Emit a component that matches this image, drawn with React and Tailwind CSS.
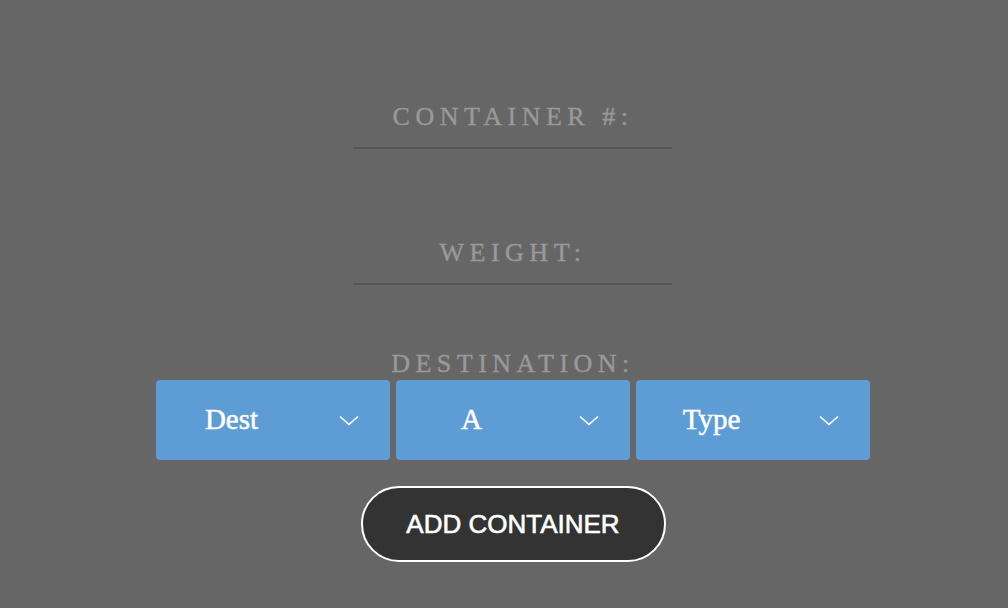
import { useState } from 'react'

const serif = { fontFamily: '"Liberation Serif", "Times New Roman", serif' }

function Field({ label, value, onChange, className = '' }) {
  return (
    <div className={`flex flex-col items-center ${className}`}>
      <label className="block h-[26px] text-[26px] leading-[26px] tracking-[5.5px] text-[#999999] uppercase [-webkit-text-stroke:0.4px_#999999]" style={serif}>
        {label}
      </label>
      <input
        className="w-[318px] h-[19px] bg-transparent border-b-2 border-[#555555] outline-none text-center text-[#dddddd]"
        value={value}
        onChange={e => onChange(e.target.value)}
      />
    </div>
  )
}

function Chevron() {
  return (
    <svg width="20" height="11" viewBox="0 0 20 11" fill="none" className="ml-auto mr-[31px]">
      <path d="M1 1.5 L10 9.5 L19 1.5" stroke="#ffffff" strokeWidth="1.6" />
    </svg>
  )
}

function Select({ text }) {
  return (
    <div className="w-[234px] h-[80px] rounded-[4px] bg-[#5e9cd5] flex items-center cursor-pointer">
      <span className="w-[151px] text-center text-[29px] text-white [-webkit-text-stroke:0.5px_white]" style={serif}>{text}</span>
      <Chevron />
    </div>
  )
}

export default function App() {
  const [container, setContainer] = useState('')
  const [weight, setWeight] = useState('')

  return (
    <div className="min-h-[608px] w-full bg-[#666666] pl-[18px]">
      <div className="flex flex-col items-center pt-[104px]">
        <Field label="Container #:" value={container} onChange={setContainer} />
        <Field label="Weight:" value={weight} onChange={setWeight} className="mt-[91px]" />
        <div className="mt-[66px] h-[26px] text-[26px] leading-[26px] tracking-[5.5px] text-[#999999] uppercase [-webkit-text-stroke:0.4px_#999999]" style={serif}>
          Destination:
        </div>
        <div className="mt-[3px] flex gap-[6px]">
          <Select text="Dest" />
          <Select text="A" />
          <Select text="Type" />
        </div>
        <button
          className="mt-[26px] w-[305px] h-[76px] rounded-full bg-[#333333] border-2 border-white text-white text-[26px] cursor-pointer [-webkit-text-stroke:0.6px_white]"
          style={{ fontFamily: '"Liberation Sans", Arial, sans-serif' }}
        >
          ADD CONTAINER
        </button>
      </div>
    </div>
  )
}
